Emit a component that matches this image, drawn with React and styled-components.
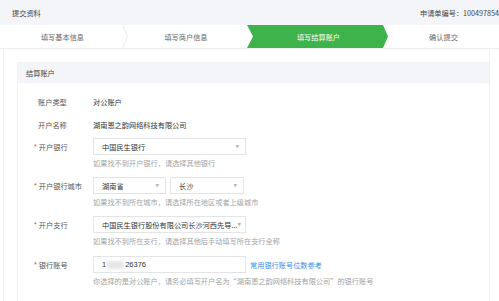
import React from "react";
import styled, { createGlobalStyle } from "styled-components";

const Global = createGlobalStyle`
  html, body { margin: 0; padding: 0; background: #fff; }
  body {
    width: 499px;
    height: 301px;
    overflow: hidden;
    font-family: "Noto Sans CJK SC", "Noto Sans", sans-serif;
    font-size: 7.2px;
    color: #333;
  }
`;

const Header = styled.div`
  height: 25px;
  background: #f4f5f8;
  display: flex;
  align-items: center;
  justify-content: space-between;
  padding-left: 12px;
  white-space: nowrap;
`;

const HeaderTitle = styled.div`
  color: #444;
`;

const OrderNo = styled.div`
  color: #444;
`;

const Steps = styled.div`
  height: 23px;
  display: grid;
  grid-template-columns: 125px 122px 141px 1fr;
  border-bottom: 1px solid #eceef0;
  background: #fff;
`;

const Step = styled.div`
  position: relative;
  display: flex;
  align-items: center;
  justify-content: center;
  color: ${(p) => (p.$active ? "#fff" : "#666")};
  background: ${(p) => (p.$active ? "#3fb34b" : "transparent")};
  clip-path: ${(p) =>
    p.$active
      ? "polygon(0 0, calc(100% - 5px) 0, 100% 50%, calc(100% - 5px) 100%, 0 100%, 6px 50%)"
      : "none"};
  padding-left: ${(p) => (p.$active ? "2px" : "0")};
`;

const Chevron = styled.svg`
  position: absolute;
  right: -3px;
  top: 0;
  width: 6px;
  height: 23px;
`;

const Panel = styled.div`
  margin-left: 3px;
  width: 487px;
  height: 252px;
  box-sizing: border-box;
  border-left: 1px solid #eef0f2;
  border-right: 1px solid #eef0f2;
  padding: 13px 0 0 13px;
`;

const Card = styled.div`
  border-left: 1px solid #f0f1f3;
  height: 100%;
`;

const CardHeader = styled.div`
  height: 21px;
  background: #f4f5f8;
  display: flex;
  align-items: center;
  padding-left: 8px;
  color: #444;
`;

const CardBody = styled.div`
  padding: 7px 0 0 16px;
`;

const InfoRow = styled.div`
  height: 23px;
  display: flex;
  align-items: center;
`;

const Label = styled.div`
  width: 59px;
  flex: none;
  color: #555;
  padding-left: ${(p) => (p.$req ? "0" : "4px")};
  box-sizing: border-box;
  white-space: nowrap;
`;

const Star = styled.span`
  color: #e8423f;
  margin-right: 2px;
  font-family: "Liberation Sans", sans-serif;
`;

const Value = styled.div`
  color: #333;
`;

const FieldRow = styled.div`
  display: flex;
  margin-top: ${(p) => p.$mt || 9}px;
`;

const FieldLabel = styled(Label)`
  height: 17px;
  display: flex;
  align-items: center;
`;

const FieldCol = styled.div`
  display: flex;
  flex-direction: column;
`;

const Controls = styled.div`
  display: flex;
  align-items: center;
  gap: 4px;
`;

const Select = styled.div`
  width: ${(p) => p.$w}px;
  height: 17px;
  box-sizing: border-box;
  border: 1px solid #e3e4e6;
  display: flex;
  align-items: center;
  justify-content: space-between;
  padding: 0 6px 0 8px;
  color: #333;
  white-space: nowrap;
`;

const Caret = styled.span`
  color: #b5b5b5;
  font-size: 4.5px;
  font-family: "DejaVu Sans", sans-serif;
`;

const Input = styled.div`
  width: 153px;
  height: 17px;
  box-sizing: border-box;
  border: 1px solid #e3e4e6;
  display: flex;
  align-items: center;
  padding-left: 8px;
  color: #333;
  font-family: "Liberation Sans", "Noto Sans CJK SC", sans-serif;
  font-size: 7.5px;
`;

const Blur = styled.span`
  display: inline-block;
  width: 17px;
  height: 8px;
  background: #e6e6e6;
  filter: blur(1.5px);
  margin: 0 1px;
`;

const Link = styled.a`
  color: #3b8ee8;
  text-decoration: none;
`;

const Hint = styled.div`
  margin-top: 3px;
  height: 10px;
  line-height: 10px;
  color: #a3a3a3;
  white-space: nowrap;
`;

function Field({ label, children, hint, mt }) {
  return (
    <FieldRow $mt={mt}>
      <FieldLabel $req>
        <Star>*</Star>
        {label}
      </FieldLabel>
      <FieldCol>
        <Controls>{children}</Controls>
        <Hint>{hint}</Hint>
      </FieldCol>
    </FieldRow>
  );
}

export default function App() {
  return (
    <>
      <Global />
      <Header>
        <HeaderTitle>提交资料</HeaderTitle>
        <OrderNo>申请单编号：100497854</OrderNo>
      </Header>
      <Steps>
        <Step>
          填写基本信息
          <Chevron viewBox="0 0 6 23">
            <polyline points="0.5,0 5.5,11.5 0.5,23" fill="none" stroke="#e3e5e8" strokeWidth="0.8" />
          </Chevron>
        </Step>
        <Step>填写商户信息</Step>
        <Step $active>填写结算账户</Step>
        <Step>确认提交</Step>
      </Steps>
      <Panel>
        <Card>
          <CardHeader>结算账户</CardHeader>
          <CardBody>
            <InfoRow>
              <Label>账户类型</Label>
              <Value>对公账户</Value>
            </InfoRow>
            <InfoRow>
              <Label>开户名称</Label>
              <Value>湖南恩之韵网络科技有限公司</Value>
            </InfoRow>
            <Field label="开户银行" mt={2} hint="如果找不到开户银行，请选择其他银行">
              <Select $w={153}>
                中国民生银行<Caret>▼</Caret>
              </Select>
            </Field>
            <Field label="开户银行城市" hint="如果找不到所在城市，请选择所在地区或者上级城市">
              <Select $w={73}>
                湖南省<Caret>▼</Caret>
              </Select>
              <Select $w={74}>
                长沙<Caret>▼</Caret>
              </Select>
            </Field>
            <Field label="开户支行" hint="如果找不到所在支行，请选择其他后手动填写所在支行全称">
              <Select $w={153}>
                中国民生银行股份有限公司长沙河西先导...<Caret>▼</Caret>
              </Select>
            </Field>
            <Field
              label="银行账号"
              mt={10}
              hint="你选择的是对公账户，请务必填写开户名为“湖南恩之韵网络科技有限公司”的银行账号"
            >
              <Input>
                1<Blur />26376
              </Input>
              <Link href="#">常用银行账号位数参考</Link>
            </Field>
          </CardBody>
        </Card>
      </Panel>
    </>
  );
}
